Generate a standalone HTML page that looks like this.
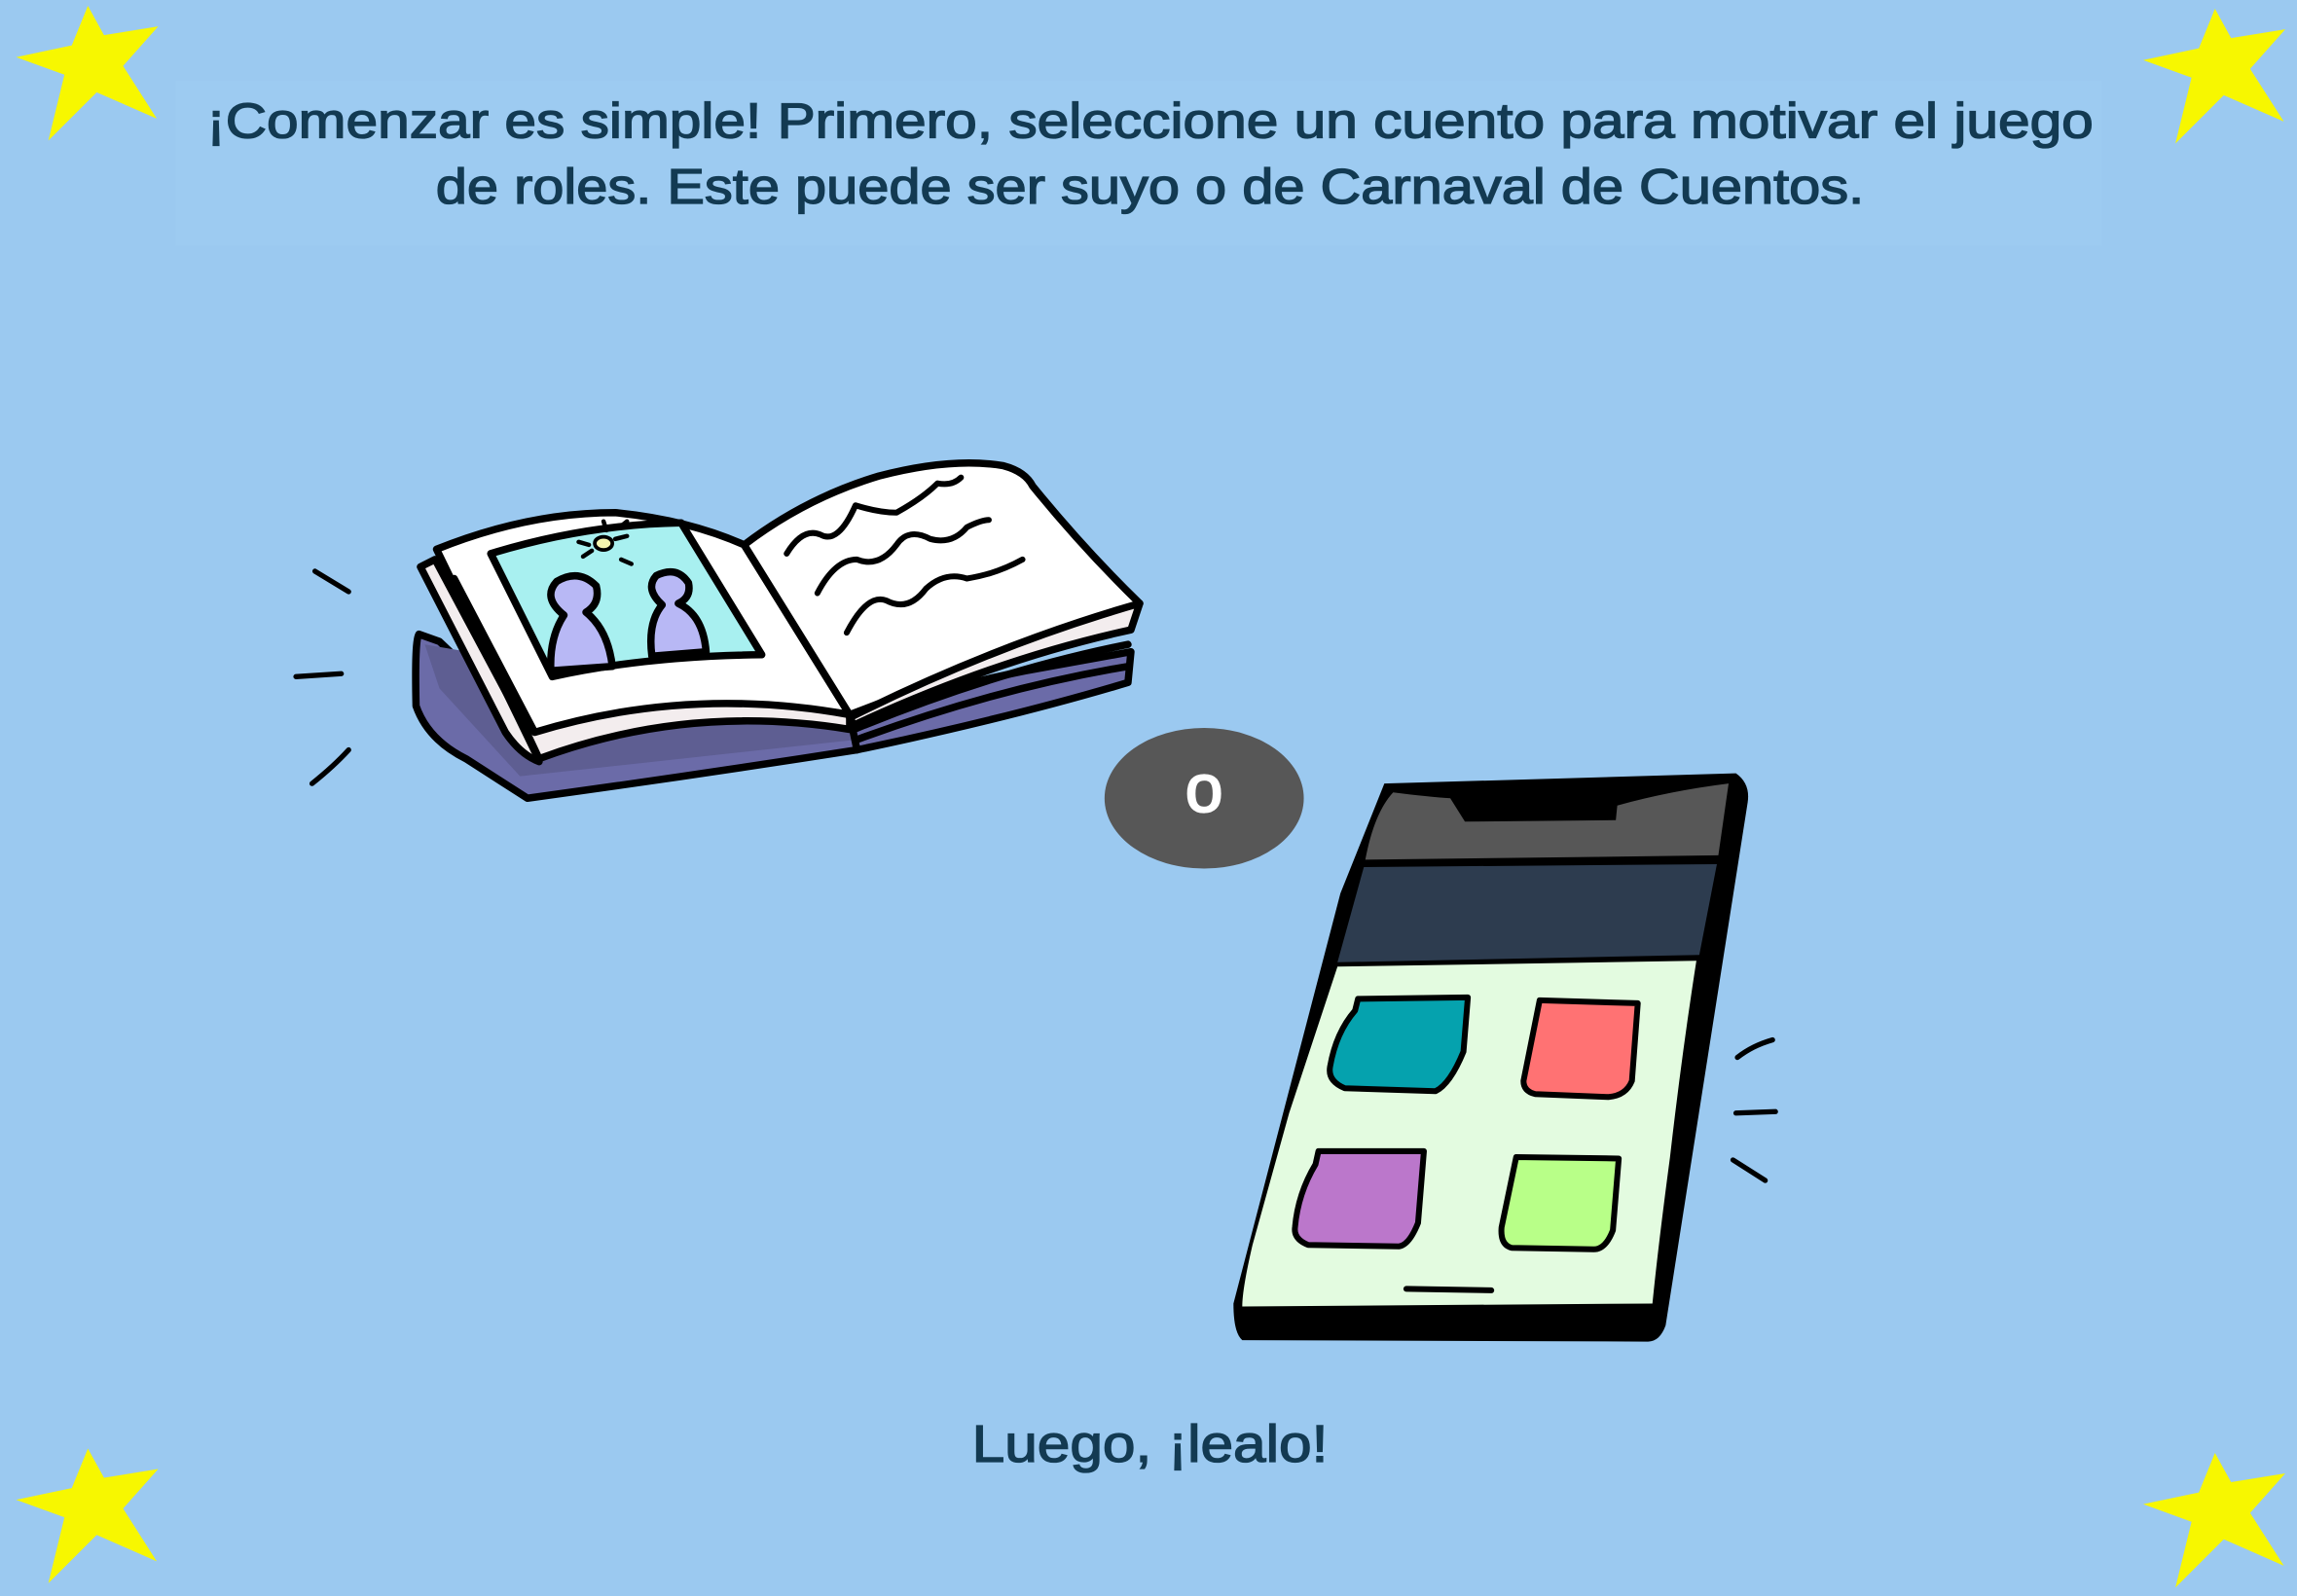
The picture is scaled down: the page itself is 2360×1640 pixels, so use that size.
<!DOCTYPE html>
<html><head><meta charset="utf-8">
<style>
html,body{margin:0;padding:0;background:#9BC9F0;}
svg{display:block;width:2360px;height:1640px;}
</style></head>
<body>
<svg viewBox="0 0 1568 1089.7" preserveAspectRatio="none" xmlns="http://www.w3.org/2000/svg">
<rect width="1568" height="1090" fill="#9BC9F0"/>
<rect x="120" y="55" width="1315" height="113" fill="#9DCBF1"/>
<defs>
<path id="star" d="M60,4 L71,24 L108,18 L84,45 L107,81 L66,63 L33,96 L44,51 L11,39 L49,31 Z" fill="#F7F700"/>
</defs>
<use href="#star"/>
<use href="#star" transform="translate(1452,2)"/>
<use href="#star" transform="translate(0,985)"/>
<use href="#star" transform="translate(1452,988)"/>

<g font-family="Liberation Sans, sans-serif" fill="#133A52" stroke="#133A52" stroke-width="0.9" text-anchor="middle">
<text x="785" y="94" font-size="34" textLength="1288" lengthAdjust="spacingAndGlyphs">¡Comenzar es simple! Primero, seleccione un cuento para motivar el juego</text>
<text x="785" y="139" font-size="34" textLength="975" lengthAdjust="spacingAndGlyphs">de roles. Este puede ser suyo o de Carnaval de Cuentos.</text>
<text x="785" y="998" font-size="36" textLength="243" lengthAdjust="spacingAndGlyphs">Luego, ¡lealo!</text>
</g>

<!-- book -->
<g stroke="#000" stroke-width="5" stroke-linejoin="round" stroke-linecap="round">
<path d="M286,433 Q283,436 284,482 Q292,505 318,518 L360,545 Q470,530 585,512 Q690,490 770,466 L772,445 L700,458 Q640,470 585,488 L510,478 Q420,470 365,500 L300,438 Z" fill="#6B6BA8"/>
<path d="M290,440 L300,470 L355,530 L585,505 L585,490 Z" fill="#5E5E92" stroke="none"/>
<path d="M287,387 L297,382 L360,500 L368,520 Q355,515 345,500 Z" fill="#F3EDEE"/>
<path d="M298,375 Q360,350 420,350 Q470,355 508,372 L580,488 Q470,470 365,513 Z" fill="#FFFFFF"/>
<path d="M310,395 L365,500 Q470,468 580,488 L580,498 Q470,480 368,518 Z" fill="#F3EDEE"/>
<path d="M335,378 Q400,358 465,357 L520,447 Q440,448 377,462 Z" fill="#A8F0F0"/>
<path d="M376,458 Q375,435 385,420 Q370,408 380,397 Q395,388 407,400 Q410,412 400,418 Q415,430 418,455 Z" fill="#B8B8F5"/>
<path d="M445,448 Q442,425 452,413 Q440,402 448,393 Q462,386 470,398 Q472,408 463,412 Q480,420 482,445 Z" fill="#B8B8F5"/>
<path d="M508,372 Q550,340 600,325 Q650,312 685,318 Q700,322 705,332 Q740,375 778,412 L580,488 Z" fill="#FFFFFF"/>
<path d="M580,490 Q680,440 778,412 L772,430 Q680,450 583,495 Z" fill="#F3EDEE"/>
<path d="M583,498 Q680,458 770,440 M585,505 Q680,470 770,455" fill="none"/>
<path d="M580,488 L585,512" fill="none"/>
<path d="M537,378 Q548,360 560,365 Q572,372 584,345 Q600,350 612,350 Q630,340 640,330 Q650,332 656,326 M558,405 Q570,382 585,382 Q600,388 612,372 Q620,360 635,368 Q650,372 660,360 Q670,355 675,355 M578,432 Q592,405 605,410 Q620,418 632,402 Q645,390 660,395 Q680,392 698,382" fill="none" stroke-width="4"/>
<path d="M395,370 L402,372 M420,368 L428,366 M398,380 L404,376 M424,382 L431,385 M412,356 L414,362 M423,360 L428,356" fill="none" stroke-width="3"/>
<ellipse cx="412" cy="371" rx="6" ry="4.5" fill="#F7F7B0" stroke-width="2.5"/>
<path d="M215,390 L238,404 M202,462 L233,460 M213,535 Q228,523 238,512" fill="none" stroke-width="3.5"/>
</g>

<!-- bubble -->
<ellipse cx="822" cy="545" rx="68" ry="48" fill="#575757"/>
<text x="822" y="554" font-family="Liberation Sans, sans-serif" font-size="46" fill="#fff" stroke="#fff" stroke-width="1.5" text-anchor="middle">o</text>

<!-- phone -->
<g stroke-linejoin="round" stroke-linecap="round">
<path d="M945,535 L1185,528 Q1195,535 1193,548 L1137,905 Q1133,916 1125,916 L848,915 Q842,910 842,890 L915,610 Z" fill="#000"/>
<path d="M951,541 Q975,544 990,545 L1000,561 L1103,560 L1104,550 Q1140,540 1180,535 L1173,584 L932,587 Q938,555 951,541 Z" fill="#575757"/>
<path d="M931,592 L1172,590 L1160,652 L913,657 Z" fill="#2D3C4F"/>
<path d="M913,660 L1158,656 Q1148,720 1140,790 Q1132,850 1128,890 L848,892 Q848,880 855,850 L880,760 Z" fill="#E3FBE0"/>
<g stroke="#000" stroke-width="4">
<path d="M927,682 L1002,681 L999,718 Q990,740 980,745 L918,743 Q906,738 908,728 Q912,705 925,690 Z" fill="#05A2AE"/>
<path d="M1051,683 L1118,685 L1114,738 Q1110,748 1098,749 L1048,747 Q1040,745 1040,738 Z" fill="#FF7273"/>
<path d="M900,786 L972,786 L968,835 Q962,850 955,851 L893,850 Q883,846 884,838 Q886,815 898,795 Z" fill="#BB77CB"/>
<path d="M1035,790 L1105,791 L1101,840 Q1096,853 1088,853 L1032,852 Q1024,850 1025,838 Z" fill="#B8FF88"/>
<path d="M960,880 L1018,881" fill="none"/>
<path d="M1186,722 Q1196,714 1210,710 M1185,760 L1212,759 M1183,792 L1205,806" fill="none" stroke-width="3.5"/>
</g>
</g>
</svg>
</body></html>
